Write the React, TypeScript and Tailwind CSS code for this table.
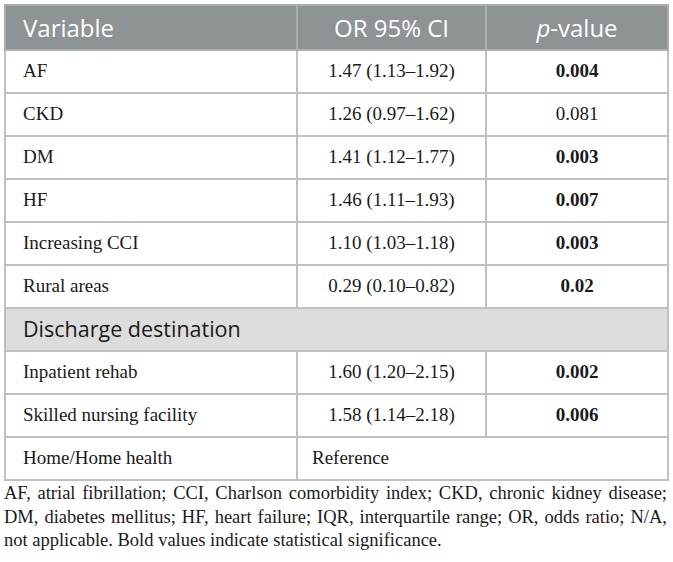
const rows = [
  { name: "AF", or: "1.47 (1.13–1.92)", p: "0.004", bold: true },
  { name: "CKD", or: "1.26 (0.97–1.62)", p: "0.081", bold: false },
  { name: "DM", or: "1.41 (1.12–1.77)", p: "0.003", bold: true },
  { name: "HF", or: "1.46 (1.11–1.93)", p: "0.007", bold: true },
  { name: "Increasing CCI", or: "1.10 (1.03–1.18)", p: "0.003", bold: true },
  { name: "Rural areas", or: "0.29 (0.10–0.82)", p: "0.02", bold: true },
];

const discharge = [
  { name: "Inpatient rehab", or: "1.60 (1.20–2.15)", p: "0.002", bold: true },
  { name: "Skilled nursing facility", or: "1.58 (1.14–2.18)", p: "0.006", bold: true },
];

const serif = "font-['Liberation_Serif',serif]";
const sans = "font-['Open_Sans',sans-serif]";

function DataRow({ r }: { r: { name: string; or: string; p: string; bold: boolean } }) {
  return (
    <tr className="h-[43px]">
      <td className="border-2 border-[#c0c0c0] pl-[17px]">{r.name}</td>
      <td className="border-2 border-[#c0c0c0] text-center">{r.or}</td>
      <td className={`border-2 border-[#c0c0c0] text-center ${r.bold ? "font-bold" : ""}`}>{r.p}</td>
    </tr>
  );
}

export default function App() {
  return (
    <main className="w-[673px] h-[562px] bg-white pt-[4px] px-[4px] text-[#1a1a1a]">
      <table className={`w-[663px] border-collapse table-fixed text-[19px] ${serif}`}>
        <colgroup>
          <col className="w-[292px]" />
          <col className="w-[189px]" />
          <col className="w-[182px]" />
        </colgroup>
        <thead>
          <tr className={`h-[45px] bg-[#8e9395] text-white text-[24px] ${sans}`}>
            <th className="border-2 border-[#a9aeb0] pl-[17px] text-left font-normal">Variable</th>
            <th className="border-2 border-[#a9aeb0] text-center font-normal">OR 95% CI</th>
            <th className="border-2 border-[#a9aeb0] text-center font-normal">
              <i>p</i>-value
            </th>
          </tr>
        </thead>
        <tbody>
          {rows.map((r) => (
            <DataRow key={r.name} r={r} />
          ))}
          <tr className={`h-[43px] bg-[#dcdedd] text-[21.5px] ${sans}`}>
            <td colSpan={3} className="border-2 border-[#c0c0c0] pl-[17px]">
              Discharge destination
            </td>
          </tr>
          {discharge.map((r) => (
            <DataRow key={r.name} r={r} />
          ))}
          <tr className="h-[43px]">
            <td className="border-2 border-[#c0c0c0] pl-[17px]">Home/Home health</td>
            <td colSpan={2} className="border-2 border-[#c0c0c0] pl-[14px]">
              Reference
            </td>
          </tr>
        </tbody>
      </table>
      <p className={`w-[663px] mt-[1px] text-[18.5px] leading-[23.5px] text-justify ${serif}`}>
        AF, atrial fibrillation; CCI, Charlson comorbidity index; CKD, chronic kidney disease; DM,
        diabetes mellitus; HF, heart failure; IQR, interquartile range; OR, odds ratio; N/A, not
        applicable. Bold values indicate statistical significance.
      </p>
    </main>
  );
}
